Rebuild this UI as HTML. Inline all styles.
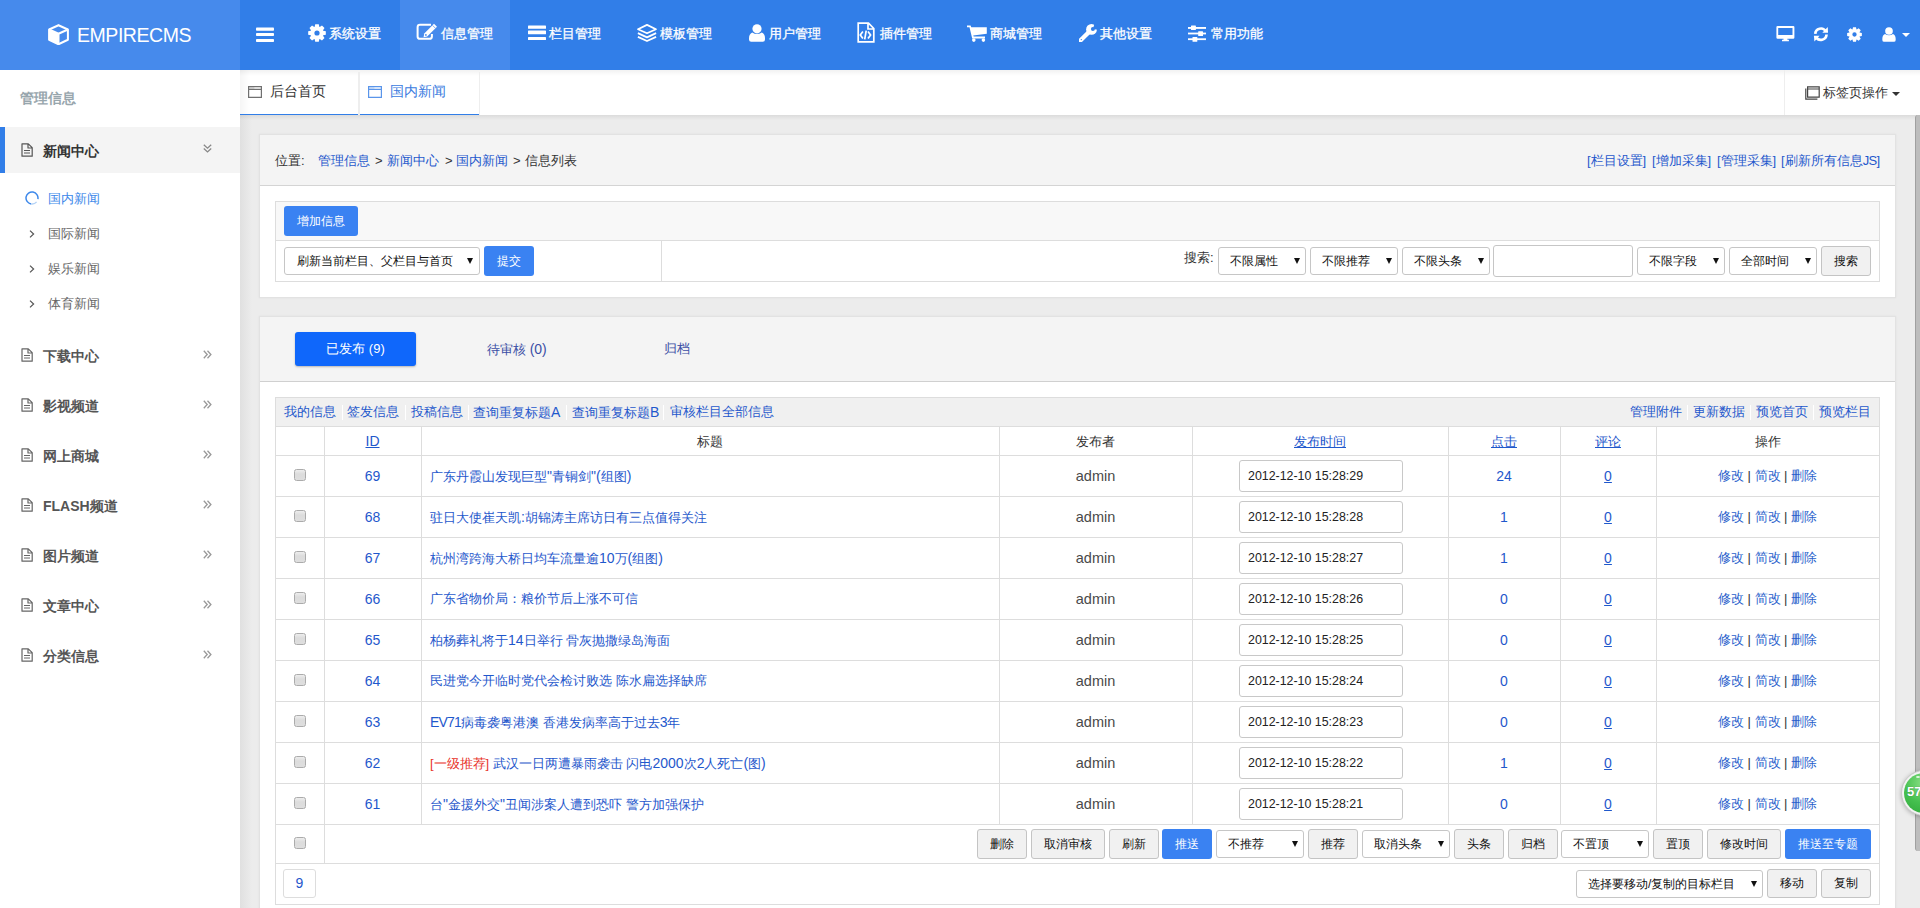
<!DOCTYPE html>
<html><head><meta charset="utf-8"><style>*{box-sizing:border-box;}
html,body{margin:0;padding:0;}
body{width:1920px;height:908px;overflow:hidden;position:relative;background:#ececec;font-family:"Liberation Sans",sans-serif;font-size:13px;color:#333;}
.a{position:absolute;}
.t{position:absolute;white-space:nowrap;line-height:20px;}
.L{font-size:14px;}
u{text-decoration:underline;text-underline-offset:1px;}
</style></head><body>
<div class="a" style="left:0px;top:0px;width:1920px;height:70px;background:#317ee8"></div>
<div class="a" style="left:0px;top:0px;width:240px;height:70px;background:#468aec"></div>
<div class="a" style="left:400px;top:0px;width:110px;height:70px;background:#468aec"></div>
<svg class="a" style="left:48px;top:24px" width="21" height="21.4" viewBox="0 0 23 22" preserveAspectRatio="none"><g fill="none" stroke="#fff" stroke-width="2.2" stroke-linejoin="round"><path d="M11.5 1.2 L21.8 5.6 L21.8 16.2 L11.5 20.8 L1.2 16.2 L1.2 5.6Z"/><path d="M1.2 5.6 L11.5 10 L21.8 5.6 M11.5 10 L11.5 20.8"/></g><path d="M1.2 5.6 L11.5 10 L11.5 20.8 L1.2 16.2Z" fill="#fff"/></svg>
<div class="t" style="left:77px;top:23px;font-size:19.5px;color:#fff;line-height:24px;letter-spacing:-0.45px;">EMPIRECMS</div>
<svg class="a" style="left:256px;top:27px" width="18" height="15" viewBox="0 0 18 15"><g fill="#fff"><rect x="0" y="0.6" width="18" height="3.1" rx="0.8"/><rect x="0" y="6.1" width="18" height="2.9" rx="0.8"/><rect x="0" y="12.1" width="18" height="2.9" rx="0.8"/></g></svg>
<svg class="a" style="left:308px;top:24px" width="18" height="18" viewBox="0 0 18 18"><path fill="#fff" fill-rule="evenodd" d="M6.67 2.82 L7.21 0.18 L10.79 0.18 L11.33 2.82 L11.72 2.99 L13.97 1.50 L16.50 4.03 L15.01 6.28 L15.18 6.67 L17.82 7.21 L17.82 10.79 L15.18 11.33 L15.01 11.72 L16.50 13.97 L13.97 16.50 L11.72 15.01 L11.33 15.18 L10.79 17.82 L7.21 17.82 L6.67 15.18 L6.28 15.01 L4.03 16.50 L1.50 13.97 L2.99 11.72 L2.82 11.33 L0.18 10.79 L0.18 7.21 L2.82 6.67 L2.99 6.28 L1.50 4.03 L4.03 1.50 L6.28 2.99Z M6.40 9.00 a2.60 2.60 0 1 0 5.20 0 a2.60 2.60 0 1 0 -5.20 0Z"/></svg>
<svg class="a" style="left:416px;top:23px" width="22" height="18" viewBox="0 0 22 18"><path fill="none" stroke="#fff" stroke-width="2" d="M15 1.8 H4 Q1.6 1.8 1.6 4.2 V13.4 Q1.6 15.8 4 15.8 H13.5 Q15.9 15.8 15.9 13.4 V11"/><path fill="#fff" d="M7.6 14.2 L8.23 10.6 L18.0 0.81 L20.98 3.78 L11.2 13.57Z"/><path stroke="#468aec" stroke-width="0.7" d="M16.6 2.4 L19.5 5.3"/><circle cx="9.9" cy="11.9" r="0.9" fill="#468aec"/></svg>
<svg class="a" style="left:528px;top:25px" width="18" height="15" viewBox="0 0 18 15"><g fill="#fff"><rect x="0" y="0.6" width="18" height="3.2" rx="0.6"/><rect x="0" y="5.5" width="18" height="3.8" rx="0.6"/><rect x="0" y="12" width="18" height="3" rx="0.6"/></g></svg>
<svg class="a" style="left:636px;top:23px" width="22" height="19" viewBox="0 0 22 19"><g fill="none" stroke="#fff" stroke-width="1.8" stroke-linejoin="round"><path d="M11 1.9 L20 6.2 L11 10.3 L2 6.2Z"/><path d="M1.9 10.1 L11 14.4 L20.1 10.1"/><path d="M1.9 13.9 L11 18 L20.1 13.9"/></g></svg>
<svg class="a" style="left:749px;top:24px" width="16" height="18" viewBox="0 0 16 18"><g fill="#fff"><circle cx="8" cy="4.8" r="4.6"/><path d="M3.2 8.4 Q8 11.4 12.8 8.4 Q16 9.8 16 14.2 V15.5 Q16 17.8 13.8 17.8 H2.2 Q0 17.8 0 15.5 V14.2 Q0 9.8 3.2 8.4Z"/></g></svg>
<svg class="a" style="left:857px;top:22px" width="18" height="21" viewBox="0 0 18 21"><path fill="none" stroke="#fff" stroke-width="1.7" d="M1.2 1.2 H11.5 L16.8 6.5 V19.8 H1.2Z M11 1.2 V7 H16.8"/><path fill="none" stroke="#fff" stroke-width="1.7" d="M5.9 9.4 L3.3 12.9 L5.9 16.4 M11 9.4 L13.6 12.9 L11 16.4 M9.2 8.7 L7.7 17.3"/></svg>
<svg class="a" style="left:967px;top:25px" width="20" height="17" viewBox="0 0 20 17"><g fill="#fff"><path d="M0 0.4 H3.6 L4.3 2.3 H19.8 V8.8 L6.2 10.4 L6.7 11.6 H18 V13.6 H5.2 L2.5 2.2 H0Z"/><circle cx="6.8" cy="15.1" r="1.8"/><circle cx="16.4" cy="15.1" r="1.8"/></g></svg>
<svg class="a" style="left:1077px;top:24px" width="22" height="20" viewBox="0 0 22 20"><defs><mask id="wm"><rect width="22" height="20" fill="#fff"/><circle cx="15.9" cy="4.9" r="2" fill="#000"/><path d="M15.9 4.9 L18.4 -3 L24.5 0.5 L24 6.3Z" fill="#000"/><circle cx="4.3" cy="15.6" r="0.65" fill="#000"/></mask></defs><g mask="url(#wm)" fill="#fff"><circle cx="14.5" cy="5.4" r="5.4"/><path d="M12.5 7.5 L3.4 16.5" stroke="#fff" stroke-width="4.4" stroke-linecap="round"/></g></svg>
<svg class="a" style="left:1188px;top:25px" width="18" height="17" viewBox="0 0 18 17"><g fill="#fff"><rect x="0" y="2" width="18" height="1.9"/><rect x="3" y="0.6" width="4.9" height="4.3" rx="0.5"/><rect x="0" y="7.6" width="18" height="1.8"/><rect x="10.2" y="6.2" width="4.8" height="4.7" rx="0.5"/><rect x="0" y="13.3" width="18" height="1.8"/><rect x="4.5" y="12" width="4.8" height="4.8" rx="0.5"/></g></svg>
<div class="t" style="left:329px;top:24px;font-size:13px;color:#fff;-webkit-text-stroke:0.3px #fff;">系统设置</div>
<div class="t" style="left:441px;top:24px;font-size:13px;color:#fff;-webkit-text-stroke:0.3px #fff;">信息管理</div>
<div class="t" style="left:549px;top:24px;font-size:13px;color:#fff;-webkit-text-stroke:0.3px #fff;">栏目管理</div>
<div class="t" style="left:660px;top:24px;font-size:13px;color:#fff;-webkit-text-stroke:0.3px #fff;">模板管理</div>
<div class="t" style="left:769px;top:24px;font-size:13px;color:#fff;-webkit-text-stroke:0.3px #fff;">用户管理</div>
<div class="t" style="left:880px;top:24px;font-size:13px;color:#fff;-webkit-text-stroke:0.3px #fff;">插件管理</div>
<div class="t" style="left:990px;top:24px;font-size:13px;color:#fff;-webkit-text-stroke:0.3px #fff;">商城管理</div>
<div class="t" style="left:1100px;top:24px;font-size:13px;color:#fff;-webkit-text-stroke:0.3px #fff;">其他设置</div>
<div class="t" style="left:1211px;top:24px;font-size:13px;color:#fff;-webkit-text-stroke:0.3px #fff;">常用功能</div>
<svg class="a" style="left:1776px;top:25px" width="19" height="17" viewBox="0 0 19 17"><path fill="#fff" fill-rule="evenodd" d="M1.6 0.9 H17.2 Q18.4 0.9 18.4 2.1 V12.5 Q18.4 13.7 17.2 13.7 H11.4 V14.8 H12.9 V16.2 H6 V14.8 H7.5 V13.7 H1.6 Q0.4 13.7 0.4 12.5 V2.1 Q0.4 0.9 1.6 0.9Z M2.2 3 V9.9 H16.5 V3Z"/></svg>
<svg class="a" style="left:1813px;top:26px" width="16" height="17" viewBox="0 0 16 17"><g fill="none" stroke="#fff" stroke-width="2.7"><path d="M2.26 7.9 A5.65 5.65 0 0 1 12.79 5.37"/><path d="M13.54 8.5 A5.65 5.65 0 0 1 3.01 11.03"/></g><g fill="#fff"><path d="M9.3 6.7 L15 6.7 L14.8 0.9Z"/><path d="M6.6 9.8 L0.9 9.8 L1.4 15.6Z"/></g></svg>
<svg class="a" style="left:1847px;top:27px" width="15" height="15" viewBox="0 0 18 18"><path fill="#fff" fill-rule="evenodd" d="M6.67 2.82 L7.21 0.18 L10.79 0.18 L11.33 2.82 L11.72 2.99 L13.97 1.50 L16.50 4.03 L15.01 6.28 L15.18 6.67 L17.82 7.21 L17.82 10.79 L15.18 11.33 L15.01 11.72 L16.50 13.97 L13.97 16.50 L11.72 15.01 L11.33 15.18 L10.79 17.82 L7.21 17.82 L6.67 15.18 L6.28 15.01 L4.03 16.50 L1.50 13.97 L2.99 11.72 L2.82 11.33 L0.18 10.79 L0.18 7.21 L2.82 6.67 L2.99 6.28 L1.50 4.03 L4.03 1.50 L6.28 2.99Z M6.40 9.00 a2.60 2.60 0 1 0 5.20 0 a2.60 2.60 0 1 0 -5.20 0Z"/></svg>
<svg class="a" style="left:1882px;top:27px" width="14" height="15" viewBox="0 0 16 18"><g fill="#fff"><circle cx="8" cy="4.8" r="4.6"/><path d="M3.2 8.4 Q8 11.4 12.8 8.4 Q16 9.8 16 14.2 V15.5 Q16 17.8 13.8 17.8 H2.2 Q0 17.8 0 15.5 V14.2 Q0 9.8 3.2 8.4Z"/></g></svg>
<div class="a" style="left:1902px;top:33px;width:0;height:0;border-left:4px solid transparent;border-right:4px solid transparent;border-top:4.5px solid #fff"></div>
<div class="a" style="left:0px;top:70px;width:240px;height:838px;background:#fff"></div>
<div class="t" style="left:20px;top:88px;font-size:14px;color:#98a6ad;font-weight:bold;">管理信息</div>
<div class="a" style="left:0px;top:127px;width:240px;height:46px;background:#f4f4f4"></div>
<div class="a" style="left:0px;top:127px;width:5px;height:46px;background:#317ee8"></div>
<svg class="a" style="left:21px;top:143px" width="12" height="14" viewBox="0 0 12 14"><path fill="none" stroke="#555" stroke-width="1.2" stroke-linejoin="round" d="M1 0.8 H7.3 L11.2 4.7 V13.2 H1Z M7 0.8 V5 H11.2"/><path stroke="#555" stroke-width="1" d="M3 7.5 H9 M3 10 H9"/></svg>
<div class="t" style="left:43px;top:141px;font-size:14px;color:#333;font-weight:bold;">新闻中心</div>
<svg class="a" style="left:203px;top:144px" width="9" height="9" viewBox="0 0 9 9"><path fill="none" stroke="#888" stroke-width="1.3" d="M0.8 0.8 L4.5 4.2 L8.2 0.8 M0.8 4.5 L4.5 7.9 L8.2 4.5"/></svg>
<svg class="a" style="left:25px;top:191px" width="14" height="14" viewBox="0 0 14 14"><path fill="none" stroke="#3d88ea" stroke-width="1.5" d="M12.91 8.04 A6 6 0 1 0 5.96 12.91"/><path fill="none" stroke="#b5d3f6" stroke-width="1.5" d="M5.96 12.91 A6 6 0 0 0 11.6 10.86"/></svg>
<div class="t" style="left:48px;top:189px;font-size:13px;color:#3d88ea;">国内新闻</div>
<svg class="a" style="left:29px;top:230px" width="6" height="8" viewBox="0 0 6 8"><path fill="none" stroke="#555" stroke-width="1.2" d="M1 0.6 L4.6 4 L1 7.4"/></svg>
<div class="t" style="left:48px;top:224px;font-size:13px;color:#666;">国际新闻</div>
<svg class="a" style="left:29px;top:265px" width="6" height="8" viewBox="0 0 6 8"><path fill="none" stroke="#555" stroke-width="1.2" d="M1 0.6 L4.6 4 L1 7.4"/></svg>
<div class="t" style="left:48px;top:259px;font-size:13px;color:#666;">娱乐新闻</div>
<svg class="a" style="left:29px;top:300px" width="6" height="8" viewBox="0 0 6 8"><path fill="none" stroke="#555" stroke-width="1.2" d="M1 0.6 L4.6 4 L1 7.4"/></svg>
<div class="t" style="left:48px;top:294px;font-size:13px;color:#666;">体育新闻</div>
<svg class="a" style="left:21px;top:348px" width="12" height="14" viewBox="0 0 12 14"><path fill="none" stroke="#666" stroke-width="1.2" stroke-linejoin="round" d="M1 0.8 H7.3 L11.2 4.7 V13.2 H1Z M7 0.8 V5 H11.2"/><path stroke="#666" stroke-width="1" d="M3 7.5 H9 M3 10 H9"/></svg>
<div class="t" style="left:43px;top:346px;font-size:14px;color:#555;font-weight:bold;">下载中心</div>
<svg class="a" style="left:203px;top:350px" width="9" height="9" viewBox="0 0 9 9"><path fill="none" stroke="#999" stroke-width="1.3" d="M0.8 0.8 L4.2 4.5 L0.8 8.2 M4.5 0.8 L7.9 4.5 L4.5 8.2"/></svg>
<svg class="a" style="left:21px;top:398px" width="12" height="14" viewBox="0 0 12 14"><path fill="none" stroke="#666" stroke-width="1.2" stroke-linejoin="round" d="M1 0.8 H7.3 L11.2 4.7 V13.2 H1Z M7 0.8 V5 H11.2"/><path stroke="#666" stroke-width="1" d="M3 7.5 H9 M3 10 H9"/></svg>
<div class="t" style="left:43px;top:396px;font-size:14px;color:#555;font-weight:bold;">影视频道</div>
<svg class="a" style="left:203px;top:400px" width="9" height="9" viewBox="0 0 9 9"><path fill="none" stroke="#999" stroke-width="1.3" d="M0.8 0.8 L4.2 4.5 L0.8 8.2 M4.5 0.8 L7.9 4.5 L4.5 8.2"/></svg>
<svg class="a" style="left:21px;top:448px" width="12" height="14" viewBox="0 0 12 14"><path fill="none" stroke="#666" stroke-width="1.2" stroke-linejoin="round" d="M1 0.8 H7.3 L11.2 4.7 V13.2 H1Z M7 0.8 V5 H11.2"/><path stroke="#666" stroke-width="1" d="M3 7.5 H9 M3 10 H9"/></svg>
<div class="t" style="left:43px;top:446px;font-size:14px;color:#555;font-weight:bold;">网上商城</div>
<svg class="a" style="left:203px;top:450px" width="9" height="9" viewBox="0 0 9 9"><path fill="none" stroke="#999" stroke-width="1.3" d="M0.8 0.8 L4.2 4.5 L0.8 8.2 M4.5 0.8 L7.9 4.5 L4.5 8.2"/></svg>
<svg class="a" style="left:21px;top:498px" width="12" height="14" viewBox="0 0 12 14"><path fill="none" stroke="#666" stroke-width="1.2" stroke-linejoin="round" d="M1 0.8 H7.3 L11.2 4.7 V13.2 H1Z M7 0.8 V5 H11.2"/><path stroke="#666" stroke-width="1" d="M3 7.5 H9 M3 10 H9"/></svg>
<div class="t" style="left:43px;top:496px;font-size:14px;color:#555;font-weight:bold;"><span style="font-size:14px">FLASH</span>频道</div>
<svg class="a" style="left:203px;top:500px" width="9" height="9" viewBox="0 0 9 9"><path fill="none" stroke="#999" stroke-width="1.3" d="M0.8 0.8 L4.2 4.5 L0.8 8.2 M4.5 0.8 L7.9 4.5 L4.5 8.2"/></svg>
<svg class="a" style="left:21px;top:548px" width="12" height="14" viewBox="0 0 12 14"><path fill="none" stroke="#666" stroke-width="1.2" stroke-linejoin="round" d="M1 0.8 H7.3 L11.2 4.7 V13.2 H1Z M7 0.8 V5 H11.2"/><path stroke="#666" stroke-width="1" d="M3 7.5 H9 M3 10 H9"/></svg>
<div class="t" style="left:43px;top:546px;font-size:14px;color:#555;font-weight:bold;">图片频道</div>
<svg class="a" style="left:203px;top:550px" width="9" height="9" viewBox="0 0 9 9"><path fill="none" stroke="#999" stroke-width="1.3" d="M0.8 0.8 L4.2 4.5 L0.8 8.2 M4.5 0.8 L7.9 4.5 L4.5 8.2"/></svg>
<svg class="a" style="left:21px;top:598px" width="12" height="14" viewBox="0 0 12 14"><path fill="none" stroke="#666" stroke-width="1.2" stroke-linejoin="round" d="M1 0.8 H7.3 L11.2 4.7 V13.2 H1Z M7 0.8 V5 H11.2"/><path stroke="#666" stroke-width="1" d="M3 7.5 H9 M3 10 H9"/></svg>
<div class="t" style="left:43px;top:596px;font-size:14px;color:#555;font-weight:bold;">文章中心</div>
<svg class="a" style="left:203px;top:600px" width="9" height="9" viewBox="0 0 9 9"><path fill="none" stroke="#999" stroke-width="1.3" d="M0.8 0.8 L4.2 4.5 L0.8 8.2 M4.5 0.8 L7.9 4.5 L4.5 8.2"/></svg>
<svg class="a" style="left:21px;top:648px" width="12" height="14" viewBox="0 0 12 14"><path fill="none" stroke="#666" stroke-width="1.2" stroke-linejoin="round" d="M1 0.8 H7.3 L11.2 4.7 V13.2 H1Z M7 0.8 V5 H11.2"/><path stroke="#666" stroke-width="1" d="M3 7.5 H9 M3 10 H9"/></svg>
<div class="t" style="left:43px;top:646px;font-size:14px;color:#555;font-weight:bold;">分类信息</div>
<svg class="a" style="left:203px;top:650px" width="9" height="9" viewBox="0 0 9 9"><path fill="none" stroke="#999" stroke-width="1.3" d="M0.8 0.8 L4.2 4.5 L0.8 8.2 M4.5 0.8 L7.9 4.5 L4.5 8.2"/></svg>
<div class="a" style="left:240px;top:70px;width:1680px;height:838px;background:#ececec"></div>
<div class="a" style="left:240px;top:115px;width:12px;height:793px;background:linear-gradient(to right,rgba(0,0,0,.05),rgba(0,0,0,0))"></div>
<div class="a" style="left:240px;top:70px;width:1680px;height:45px;background:#fff"></div>
<div class="a" style="left:240px;top:115px;width:1680px;height:5px;background:linear-gradient(to bottom,rgba(0,0,0,.07),rgba(0,0,0,0))"></div>
<div class="a" style="left:240px;top:70px;width:1680px;height:6px;background:linear-gradient(to bottom,rgba(0,0,0,.05),rgba(0,0,0,0))"></div>
<div class="a" style="left:240px;top:70px;width:10px;height:45px;background:linear-gradient(to right,rgba(0,0,0,.04),rgba(0,0,0,0))"></div>
<div class="a" style="left:240px;top:114px;width:118px;height:1px;background:#317ee8"></div>
<div class="a" style="left:360px;top:114px;width:119px;height:1px;background:#317ee8"></div>
<div class="a" style="left:358px;top:72px;width:2px;height:43px;background:#eee"></div>
<div class="a" style="left:479px;top:72px;width:1px;height:43px;background:#eee"></div>
<div class="a" style="left:1784px;top:70px;width:1px;height:45px;background:#eee"></div>
<svg class="a" style="left:248px;top:86px" width="14" height="12" viewBox="0 0 14 12"><path fill="none" stroke="#707070" stroke-width="1.2" d="M0.6 0.6 H13.4 V11.4 H0.6Z M0.6 3.4 H13.4"/><rect x="1.4" y="1.4" width="5" height="1.2" fill="#707070" opacity="0.35"/></svg>
<div class="t" style="left:270px;top:81px;font-size:14px;color:#333;">后台首页</div>
<svg class="a" style="left:368px;top:86px" width="14" height="12" viewBox="0 0 14 12"><path fill="none" stroke="#5a95ea" stroke-width="1.2" d="M0.6 0.6 H13.4 V11.4 H0.6Z M0.6 3.4 H13.4"/><rect x="1.4" y="1.4" width="5" height="1.2" fill="#5a95ea" opacity="0.35"/></svg>
<div class="t" style="left:390px;top:81px;font-size:14px;color:#3a7be0;">国内新闻</div>
<svg class="a" style="left:1805px;top:86px" width="15" height="14" viewBox="0 0 15 14"><path fill="none" stroke="#444" stroke-width="1.2" d="M2.6 0.8 H14.2 V11.2 H2.6Z M2.6 3 H14.2 M0.8 2.6 V13.2 H12.4"/></svg>
<div class="t" style="left:1823px;top:83px;font-size:13px;color:#333;">标签页操作</div>
<div class="a" style="left:1892px;top:92px;width:0;height:0;border-left:4px solid transparent;border-right:4px solid transparent;border-top:4px solid #333"></div>
<div class="a" style="left:259px;top:134px;width:1637px;height:164px;background:#fff;border:1px solid #e2e2e2;box-shadow:0 0 2px rgba(0,0,0,.06)"></div>
<div class="a" style="left:260px;top:135px;width:1635px;height:51px;background:#f4f4f4;border-bottom:1px solid #d4d4d4"></div>
<div class="t" style="left:275px;top:151px;font-size:13px;color:#333;">位置:</div>
<div class="t" style="left:318px;top:151px;font-size:13px;color:#1f58cc;">管理信息</div>
<div class="t" style="left:375px;top:151px;font-size:13px;color:#333;">&gt;</div>
<div class="t" style="left:387px;top:151px;font-size:13px;color:#1f58cc;">新闻中心</div>
<div class="t" style="left:445px;top:151px;font-size:13px;color:#333;">&gt;</div>
<div class="t" style="left:456px;top:151px;font-size:13px;color:#1f58cc;">国内新闻</div>
<div class="t" style="left:513px;top:151px;font-size:13px;color:#333;">&gt;</div>
<div class="t" style="left:525px;top:151px;font-size:13px;color:#333;">信息列表</div>
<div class="t" style="left:1587px;top:151px;font-size:13px;color:#1f58cc;">[栏目设置]</div>
<div class="t" style="left:1652px;top:151px;font-size:13px;color:#1f58cc;">[增加采集]</div>
<div class="t" style="left:1717px;top:151px;font-size:13px;color:#1f58cc;">[管理采集]</div>
<div class="t" style="left:1781px;top:151px;font-size:13px;color:#1f58cc;">[刷新所有信息<span style="letter-spacing:-0.6px">JS</span>]</div>
<div class="a" style="left:275px;top:201px;width:1605px;height:81px;background:#fff;border:1px solid #dddddd"></div>
<div class="a" style="left:276px;top:202px;width:1603px;height:39px;background:#f8f8f8;border-bottom:1px solid #dddddd"></div>
<div class="a" style="left:661px;top:241px;width:1px;height:40px;background:#dddddd"></div>
<div class="a" style="left:284px;top:206px;width:74px;height:30px;background:#3a82f2;border-radius:3px"></div>
<div class="t" style="left:284px;top:211px;width:74px;text-align:center;font-size:12px;color:#fff">增加信息</div>
<div class="a" style="left:284px;top:247px;width:196px;height:28px;background:#fff;border:1px solid #c6c6c6;border-radius:3px"></div>
<div class="t" style="left:297px;top:251px;font-size:12px;color:#111;">刷新当前栏目、父栏目与首页</div>
<div class="a" style="left:467px;top:258px;width:0;height:0;border-left:3.5px solid transparent;border-right:3.5px solid transparent;border-top:6px solid #111"></div>
<div class="a" style="left:484px;top:246px;width:50px;height:30px;background:#3a82f2;border-radius:3px"></div>
<div class="t" style="left:484px;top:251px;width:50px;text-align:center;font-size:12px;color:#fff">提交</div>
<div class="t" style="left:1184px;top:248px;font-size:13px;color:#333;">搜索:</div>
<div class="a" style="left:1218px;top:247px;width:88px;height:28px;background:#fff;border:1px solid #c6c6c6;border-radius:3px"></div>
<div class="t" style="left:1230px;top:251px;font-size:12px;color:#111;">不限属性</div>
<div class="a" style="left:1294px;top:258px;width:0;height:0;border-left:3.5px solid transparent;border-right:3.5px solid transparent;border-top:6px solid #111"></div>
<div class="a" style="left:1310px;top:247px;width:88px;height:28px;background:#fff;border:1px solid #c6c6c6;border-radius:3px"></div>
<div class="t" style="left:1322px;top:251px;font-size:12px;color:#111;">不限推荐</div>
<div class="a" style="left:1386px;top:258px;width:0;height:0;border-left:3.5px solid transparent;border-right:3.5px solid transparent;border-top:6px solid #111"></div>
<div class="a" style="left:1402px;top:247px;width:88px;height:28px;background:#fff;border:1px solid #c6c6c6;border-radius:3px"></div>
<div class="t" style="left:1414px;top:251px;font-size:12px;color:#111;">不限头条</div>
<div class="a" style="left:1478px;top:258px;width:0;height:0;border-left:3.5px solid transparent;border-right:3.5px solid transparent;border-top:6px solid #111"></div>
<div class="a" style="left:1493px;top:245px;width:140px;height:32px;background:#fff;border:1px solid #c6c6c6;border-radius:3px"></div>
<div class="a" style="left:1637px;top:247px;width:88px;height:28px;background:#fff;border:1px solid #c6c6c6;border-radius:3px"></div>
<div class="t" style="left:1649px;top:251px;font-size:12px;color:#111;">不限字段</div>
<div class="a" style="left:1713px;top:258px;width:0;height:0;border-left:3.5px solid transparent;border-right:3.5px solid transparent;border-top:6px solid #111"></div>
<div class="a" style="left:1729px;top:247px;width:88px;height:28px;background:#fff;border:1px solid #c6c6c6;border-radius:3px"></div>
<div class="t" style="left:1741px;top:251px;font-size:12px;color:#111;">全部时间</div>
<div class="a" style="left:1805px;top:258px;width:0;height:0;border-left:3.5px solid transparent;border-right:3.5px solid transparent;border-top:6px solid #111"></div>
<div class="a" style="left:1821px;top:246px;width:50px;height:30px;background:#f1f1f1;border:1px solid #c4c4c4;border-radius:3px"></div>
<div class="t" style="left:1821px;top:251px;width:50px;text-align:center;font-size:12px;color:#111">搜索</div>
<div class="a" style="left:259px;top:316px;width:1637px;height:604px;background:#fff;border:1px solid #e2e2e2;box-shadow:0 0 2px rgba(0,0,0,.06)"></div>
<div class="a" style="left:260px;top:317px;width:1635px;height:65px;background:#f4f4f4;border-bottom:1px solid #d0d0d0"></div>
<div class="a" style="left:295px;top:332px;width:121px;height:34px;background:#0f67fb;border-radius:3px;box-shadow:0 1px 2px rgba(0,0,0,.25)"></div>
<div class="t" style="left:295px;top:339px;font-size:13px;color:#fff;"><div style="width:121px;text-align:center">已发布 (9)</div></div>
<div class="t" style="left:487px;top:339px;font-size:13px;color:#3b4fa5;">待审核 <span class="L">(0)</span></div>
<div class="t" style="left:664px;top:339px;font-size:13px;color:#3b4fa5;">归档</div>
<div class="a" style="left:275px;top:397px;width:1605px;height:508px;background:#fff;border:1px solid #dddddd"></div>
<div class="a" style="left:276px;top:398px;width:1603px;height:29px;background:#f0f0f0;border-bottom:1px solid #dddddd"></div>
<div class="t" style="left:284px;top:402px;font-size:13px;color:#1f58cc;">我的信息</div>
<div class="t" style="left:347px;top:402px;font-size:13px;color:#1f58cc;">签发信息</div>
<div class="t" style="left:411px;top:402px;font-size:13px;color:#1f58cc;">投稿信息</div>
<div class="t" style="left:473px;top:402px;font-size:13px;color:#1f58cc;">查询重复标题<span class="L">A</span></div>
<div class="t" style="left:572px;top:402px;font-size:13px;color:#1f58cc;">查询重复标题<span class="L">B</span></div>
<div class="t" style="left:670px;top:402px;font-size:13px;color:#1f58cc;">审核栏目全部信息</div>
<div class="a" style="left:342px;top:405px;width:1px;height:15px;background:#fff"></div>
<div class="a" style="left:405px;top:405px;width:1px;height:15px;background:#fff"></div>
<div class="a" style="left:468px;top:405px;width:1px;height:15px;background:#fff"></div>
<div class="a" style="left:566px;top:405px;width:1px;height:15px;background:#fff"></div>
<div class="a" style="left:663px;top:405px;width:1px;height:15px;background:#fff"></div>
<div class="t" style="left:1630px;top:402px;font-size:13px;color:#1f58cc;">管理附件</div>
<div class="t" style="left:1693px;top:402px;font-size:13px;color:#1f58cc;">更新数据</div>
<div class="t" style="left:1756px;top:402px;font-size:13px;color:#1f58cc;">预览首页</div>
<div class="t" style="left:1819px;top:402px;font-size:13px;color:#1f58cc;">预览栏目</div>
<div class="a" style="left:1687px;top:405px;width:1px;height:15px;background:#fff"></div>
<div class="a" style="left:1750px;top:405px;width:1px;height:15px;background:#fff"></div>
<div class="a" style="left:1813px;top:405px;width:1px;height:15px;background:#fff"></div>
<div class="a" style="left:276px;top:455px;width:1603px;height:1px;background:#dddddd"></div>
<div class="a" style="left:276px;top:496px;width:1603px;height:1px;background:#dddddd"></div>
<div class="a" style="left:276px;top:537px;width:1603px;height:1px;background:#dddddd"></div>
<div class="a" style="left:276px;top:578px;width:1603px;height:1px;background:#dddddd"></div>
<div class="a" style="left:276px;top:619px;width:1603px;height:1px;background:#dddddd"></div>
<div class="a" style="left:276px;top:660px;width:1603px;height:1px;background:#dddddd"></div>
<div class="a" style="left:276px;top:701px;width:1603px;height:1px;background:#dddddd"></div>
<div class="a" style="left:276px;top:742px;width:1603px;height:1px;background:#dddddd"></div>
<div class="a" style="left:276px;top:783px;width:1603px;height:1px;background:#dddddd"></div>
<div class="a" style="left:276px;top:824px;width:1603px;height:1px;background:#dddddd"></div>
<div class="a" style="left:276px;top:863px;width:1603px;height:1px;background:#dddddd"></div>
<div class="a" style="left:324px;top:426px;width:1px;height:398px;background:#dddddd"></div>
<div class="a" style="left:421px;top:426px;width:1px;height:398px;background:#dddddd"></div>
<div class="a" style="left:999px;top:426px;width:1px;height:398px;background:#dddddd"></div>
<div class="a" style="left:1192px;top:426px;width:1px;height:398px;background:#dddddd"></div>
<div class="a" style="left:1448px;top:426px;width:1px;height:398px;background:#dddddd"></div>
<div class="a" style="left:1560px;top:426px;width:1px;height:398px;background:#dddddd"></div>
<div class="a" style="left:1656px;top:426px;width:1px;height:398px;background:#dddddd"></div>
<div class="a" style="left:324px;top:824px;width:1px;height:39px;background:#dddddd"></div>
<div class="t" style="left:324px;top:431px;width:97px;text-align:center;font-size:14px;color:#1f58cc;"><u>ID</u></div>
<div class="t" style="left:421px;top:432px;width:578px;text-align:center;font-size:13px;color:#333;">标题</div>
<div class="t" style="left:999px;top:432px;width:193px;text-align:center;font-size:13px;color:#333;">发布者</div>
<div class="t" style="left:1192px;top:432px;width:256px;text-align:center;font-size:13px;color:#1f58cc;"><u>发布时间</u></div>
<div class="t" style="left:1448px;top:432px;width:112px;text-align:center;font-size:13px;color:#1f58cc;"><u>点击</u></div>
<div class="t" style="left:1560px;top:432px;width:96px;text-align:center;font-size:13px;color:#1f58cc;"><u>评论</u></div>
<div class="t" style="left:1656px;top:432px;width:223px;text-align:center;font-size:13px;color:#333;">操作</div>
<div class="a" style="left:294px;top:469px;width:12px;height:12px;border:1px solid #ababab;border-radius:2.5px;background:linear-gradient(#ededed,#dcdcdc 40%,#dedede)"></div>
<div class="t" style="left:324px;top:466px;width:97px;text-align:center;font-size:14px;color:#1f58cc;">69</div>
<div class="t" style="left:430px;top:466px;font-size:13px;color:#1f58cc;">广东丹霞山发现巨型<span class="L">"</span>青铜剑<span class="L">"(</span>组图<span class="L">)</span></div>
<div class="t" style="left:999px;top:466px;width:193px;text-align:center;font-size:14.5px;color:#4a4a4a;">admin</div>
<div class="a" style="left:1239px;top:460px;width:164px;height:32px;background:#fff;border:1px solid #c8c8c8;border-radius:3px"></div>
<div class="t" style="left:1248px;top:466px;font-size:12.4px;color:#222;">2012-12-10 15:28:29</div>
<div class="t" style="left:1448px;top:466px;width:112px;text-align:center;font-size:14px;color:#1f58cc;">24</div>
<div class="t" style="left:1560px;top:466px;width:96px;text-align:center;font-size:14px;color:#1f58cc;"><u>0</u></div>
<div class="t" style="left:1656px;top:466px;width:223px;text-align:center;font-size:13px;color:#333;"><span style="color:#2a5fcc">修改</span> | <span style="color:#2a5fcc">简改</span> | <span style="color:#2a5fcc">删除</span></div>
<div class="a" style="left:294px;top:510px;width:12px;height:12px;border:1px solid #ababab;border-radius:2.5px;background:linear-gradient(#ededed,#dcdcdc 40%,#dedede)"></div>
<div class="t" style="left:324px;top:507px;width:97px;text-align:center;font-size:14px;color:#1f58cc;">68</div>
<div class="t" style="left:430px;top:507px;font-size:13px;color:#1f58cc;">驻日大使崔天凯<span class="L">:</span>胡锦涛主席访日有三点值得关注</div>
<div class="t" style="left:999px;top:507px;width:193px;text-align:center;font-size:14.5px;color:#4a4a4a;">admin</div>
<div class="a" style="left:1239px;top:501px;width:164px;height:32px;background:#fff;border:1px solid #c8c8c8;border-radius:3px"></div>
<div class="t" style="left:1248px;top:507px;font-size:12.4px;color:#222;">2012-12-10 15:28:28</div>
<div class="t" style="left:1448px;top:507px;width:112px;text-align:center;font-size:14px;color:#1f58cc;">1</div>
<div class="t" style="left:1560px;top:507px;width:96px;text-align:center;font-size:14px;color:#1f58cc;"><u>0</u></div>
<div class="t" style="left:1656px;top:507px;width:223px;text-align:center;font-size:13px;color:#333;"><span style="color:#2a5fcc">修改</span> | <span style="color:#2a5fcc">简改</span> | <span style="color:#2a5fcc">删除</span></div>
<div class="a" style="left:294px;top:551px;width:12px;height:12px;border:1px solid #ababab;border-radius:2.5px;background:linear-gradient(#ededed,#dcdcdc 40%,#dedede)"></div>
<div class="t" style="left:324px;top:548px;width:97px;text-align:center;font-size:14px;color:#1f58cc;">67</div>
<div class="t" style="left:430px;top:548px;font-size:13px;color:#1f58cc;">杭州湾跨海大桥日均车流量逾<span class="L">10</span>万<span class="L">(</span>组图<span class="L">)</span></div>
<div class="t" style="left:999px;top:548px;width:193px;text-align:center;font-size:14.5px;color:#4a4a4a;">admin</div>
<div class="a" style="left:1239px;top:542px;width:164px;height:32px;background:#fff;border:1px solid #c8c8c8;border-radius:3px"></div>
<div class="t" style="left:1248px;top:548px;font-size:12.4px;color:#222;">2012-12-10 15:28:27</div>
<div class="t" style="left:1448px;top:548px;width:112px;text-align:center;font-size:14px;color:#1f58cc;">1</div>
<div class="t" style="left:1560px;top:548px;width:96px;text-align:center;font-size:14px;color:#1f58cc;"><u>0</u></div>
<div class="t" style="left:1656px;top:548px;width:223px;text-align:center;font-size:13px;color:#333;"><span style="color:#2a5fcc">修改</span> | <span style="color:#2a5fcc">简改</span> | <span style="color:#2a5fcc">删除</span></div>
<div class="a" style="left:294px;top:592px;width:12px;height:12px;border:1px solid #ababab;border-radius:2.5px;background:linear-gradient(#ededed,#dcdcdc 40%,#dedede)"></div>
<div class="t" style="left:324px;top:589px;width:97px;text-align:center;font-size:14px;color:#1f58cc;">66</div>
<div class="t" style="left:430px;top:589px;font-size:13px;color:#1f58cc;">广东省物价局：粮价节后上涨不可信</div>
<div class="t" style="left:999px;top:589px;width:193px;text-align:center;font-size:14.5px;color:#4a4a4a;">admin</div>
<div class="a" style="left:1239px;top:583px;width:164px;height:32px;background:#fff;border:1px solid #c8c8c8;border-radius:3px"></div>
<div class="t" style="left:1248px;top:589px;font-size:12.4px;color:#222;">2012-12-10 15:28:26</div>
<div class="t" style="left:1448px;top:589px;width:112px;text-align:center;font-size:14px;color:#1f58cc;">0</div>
<div class="t" style="left:1560px;top:589px;width:96px;text-align:center;font-size:14px;color:#1f58cc;"><u>0</u></div>
<div class="t" style="left:1656px;top:589px;width:223px;text-align:center;font-size:13px;color:#333;"><span style="color:#2a5fcc">修改</span> | <span style="color:#2a5fcc">简改</span> | <span style="color:#2a5fcc">删除</span></div>
<div class="a" style="left:294px;top:633px;width:12px;height:12px;border:1px solid #ababab;border-radius:2.5px;background:linear-gradient(#ededed,#dcdcdc 40%,#dedede)"></div>
<div class="t" style="left:324px;top:630px;width:97px;text-align:center;font-size:14px;color:#1f58cc;">65</div>
<div class="t" style="left:430px;top:630px;font-size:13px;color:#1f58cc;">柏杨葬礼将于<span class="L">14</span>日举行 骨灰抛撒绿岛海面</div>
<div class="t" style="left:999px;top:630px;width:193px;text-align:center;font-size:14.5px;color:#4a4a4a;">admin</div>
<div class="a" style="left:1239px;top:624px;width:164px;height:32px;background:#fff;border:1px solid #c8c8c8;border-radius:3px"></div>
<div class="t" style="left:1248px;top:630px;font-size:12.4px;color:#222;">2012-12-10 15:28:25</div>
<div class="t" style="left:1448px;top:630px;width:112px;text-align:center;font-size:14px;color:#1f58cc;">0</div>
<div class="t" style="left:1560px;top:630px;width:96px;text-align:center;font-size:14px;color:#1f58cc;"><u>0</u></div>
<div class="t" style="left:1656px;top:630px;width:223px;text-align:center;font-size:13px;color:#333;"><span style="color:#2a5fcc">修改</span> | <span style="color:#2a5fcc">简改</span> | <span style="color:#2a5fcc">删除</span></div>
<div class="a" style="left:294px;top:674px;width:12px;height:12px;border:1px solid #ababab;border-radius:2.5px;background:linear-gradient(#ededed,#dcdcdc 40%,#dedede)"></div>
<div class="t" style="left:324px;top:671px;width:97px;text-align:center;font-size:14px;color:#1f58cc;">64</div>
<div class="t" style="left:430px;top:671px;font-size:13px;color:#1f58cc;">民进党今开临时党代会检讨败选 陈水扁选择缺席</div>
<div class="t" style="left:999px;top:671px;width:193px;text-align:center;font-size:14.5px;color:#4a4a4a;">admin</div>
<div class="a" style="left:1239px;top:665px;width:164px;height:32px;background:#fff;border:1px solid #c8c8c8;border-radius:3px"></div>
<div class="t" style="left:1248px;top:671px;font-size:12.4px;color:#222;">2012-12-10 15:28:24</div>
<div class="t" style="left:1448px;top:671px;width:112px;text-align:center;font-size:14px;color:#1f58cc;">0</div>
<div class="t" style="left:1560px;top:671px;width:96px;text-align:center;font-size:14px;color:#1f58cc;"><u>0</u></div>
<div class="t" style="left:1656px;top:671px;width:223px;text-align:center;font-size:13px;color:#333;"><span style="color:#2a5fcc">修改</span> | <span style="color:#2a5fcc">简改</span> | <span style="color:#2a5fcc">删除</span></div>
<div class="a" style="left:294px;top:715px;width:12px;height:12px;border:1px solid #ababab;border-radius:2.5px;background:linear-gradient(#ededed,#dcdcdc 40%,#dedede)"></div>
<div class="t" style="left:324px;top:712px;width:97px;text-align:center;font-size:14px;color:#1f58cc;">63</div>
<div class="t" style="left:430px;top:712px;font-size:13px;color:#1f58cc;"><span class="L" style="letter-spacing:-0.8px">EV71</span>病毒袭粤港澳 香港发病率高于过去<span class="L">3</span>年</div>
<div class="t" style="left:999px;top:712px;width:193px;text-align:center;font-size:14.5px;color:#4a4a4a;">admin</div>
<div class="a" style="left:1239px;top:706px;width:164px;height:32px;background:#fff;border:1px solid #c8c8c8;border-radius:3px"></div>
<div class="t" style="left:1248px;top:712px;font-size:12.4px;color:#222;">2012-12-10 15:28:23</div>
<div class="t" style="left:1448px;top:712px;width:112px;text-align:center;font-size:14px;color:#1f58cc;">0</div>
<div class="t" style="left:1560px;top:712px;width:96px;text-align:center;font-size:14px;color:#1f58cc;"><u>0</u></div>
<div class="t" style="left:1656px;top:712px;width:223px;text-align:center;font-size:13px;color:#333;"><span style="color:#2a5fcc">修改</span> | <span style="color:#2a5fcc">简改</span> | <span style="color:#2a5fcc">删除</span></div>
<div class="a" style="left:294px;top:756px;width:12px;height:12px;border:1px solid #ababab;border-radius:2.5px;background:linear-gradient(#ededed,#dcdcdc 40%,#dedede)"></div>
<div class="t" style="left:324px;top:753px;width:97px;text-align:center;font-size:14px;color:#1f58cc;">62</div>
<div class="t" style="left:430px;top:753px;font-size:13px;color:#1f58cc;"><span style="color:#e8342a">[一级推荐]</span> 武汉一日两遭暴雨袭击 闪电<span class="L">2000</span>次<span class="L">2</span>人死亡<span class="L">(</span>图<span class="L">)</span></div>
<div class="t" style="left:999px;top:753px;width:193px;text-align:center;font-size:14.5px;color:#4a4a4a;">admin</div>
<div class="a" style="left:1239px;top:747px;width:164px;height:32px;background:#fff;border:1px solid #c8c8c8;border-radius:3px"></div>
<div class="t" style="left:1248px;top:753px;font-size:12.4px;color:#222;">2012-12-10 15:28:22</div>
<div class="t" style="left:1448px;top:753px;width:112px;text-align:center;font-size:14px;color:#1f58cc;">1</div>
<div class="t" style="left:1560px;top:753px;width:96px;text-align:center;font-size:14px;color:#1f58cc;"><u>0</u></div>
<div class="t" style="left:1656px;top:753px;width:223px;text-align:center;font-size:13px;color:#333;"><span style="color:#2a5fcc">修改</span> | <span style="color:#2a5fcc">简改</span> | <span style="color:#2a5fcc">删除</span></div>
<div class="a" style="left:294px;top:797px;width:12px;height:12px;border:1px solid #ababab;border-radius:2.5px;background:linear-gradient(#ededed,#dcdcdc 40%,#dedede)"></div>
<div class="t" style="left:324px;top:794px;width:97px;text-align:center;font-size:14px;color:#1f58cc;">61</div>
<div class="t" style="left:430px;top:794px;font-size:13px;color:#1f58cc;">台<span class="L">"</span>金援外交<span class="L">"</span>丑闻涉案人遭到恐吓 警方加强保护</div>
<div class="t" style="left:999px;top:794px;width:193px;text-align:center;font-size:14.5px;color:#4a4a4a;">admin</div>
<div class="a" style="left:1239px;top:788px;width:164px;height:32px;background:#fff;border:1px solid #c8c8c8;border-radius:3px"></div>
<div class="t" style="left:1248px;top:794px;font-size:12.4px;color:#222;">2012-12-10 15:28:21</div>
<div class="t" style="left:1448px;top:794px;width:112px;text-align:center;font-size:14px;color:#1f58cc;">0</div>
<div class="t" style="left:1560px;top:794px;width:96px;text-align:center;font-size:14px;color:#1f58cc;"><u>0</u></div>
<div class="t" style="left:1656px;top:794px;width:223px;text-align:center;font-size:13px;color:#333;"><span style="color:#2a5fcc">修改</span> | <span style="color:#2a5fcc">简改</span> | <span style="color:#2a5fcc">删除</span></div>
<div class="a" style="left:294px;top:837px;width:12px;height:12px;border:1px solid #ababab;border-radius:2.5px;background:linear-gradient(#ededed,#dcdcdc 40%,#dedede)"></div>
<div class="a" style="left:977px;top:829px;width:50px;height:30px;background:#f1f1f1;border:1px solid #c4c4c4;border-radius:3px"></div>
<div class="t" style="left:977px;top:834px;width:50px;text-align:center;font-size:12px;color:#111">删除</div>
<div class="a" style="left:1031px;top:829px;width:74px;height:30px;background:#f1f1f1;border:1px solid #c4c4c4;border-radius:3px"></div>
<div class="t" style="left:1031px;top:834px;width:74px;text-align:center;font-size:12px;color:#111">取消审核</div>
<div class="a" style="left:1109px;top:829px;width:50px;height:30px;background:#f1f1f1;border:1px solid #c4c4c4;border-radius:3px"></div>
<div class="t" style="left:1109px;top:834px;width:50px;text-align:center;font-size:12px;color:#111">刷新</div>
<div class="a" style="left:1162px;top:829px;width:50px;height:30px;background:#3a82f2;border-radius:3px"></div>
<div class="t" style="left:1162px;top:834px;width:50px;text-align:center;font-size:12px;color:#fff">推送</div>
<div class="a" style="left:1216px;top:830px;width:88px;height:28px;background:#fff;border:1px solid #c6c6c6;border-radius:3px"></div>
<div class="t" style="left:1228px;top:834px;font-size:12px;color:#111;">不推荐</div>
<div class="a" style="left:1292px;top:841px;width:0;height:0;border-left:3.5px solid transparent;border-right:3.5px solid transparent;border-top:6px solid #111"></div>
<div class="a" style="left:1308px;top:829px;width:50px;height:30px;background:#f1f1f1;border:1px solid #c4c4c4;border-radius:3px"></div>
<div class="t" style="left:1308px;top:834px;width:50px;text-align:center;font-size:12px;color:#111">推荐</div>
<div class="a" style="left:1362px;top:830px;width:88px;height:28px;background:#fff;border:1px solid #c6c6c6;border-radius:3px"></div>
<div class="t" style="left:1374px;top:834px;font-size:12px;color:#111;">取消头条</div>
<div class="a" style="left:1438px;top:841px;width:0;height:0;border-left:3.5px solid transparent;border-right:3.5px solid transparent;border-top:6px solid #111"></div>
<div class="a" style="left:1454px;top:829px;width:50px;height:30px;background:#f1f1f1;border:1px solid #c4c4c4;border-radius:3px"></div>
<div class="t" style="left:1454px;top:834px;width:50px;text-align:center;font-size:12px;color:#111">头条</div>
<div class="a" style="left:1508px;top:829px;width:50px;height:30px;background:#f1f1f1;border:1px solid #c4c4c4;border-radius:3px"></div>
<div class="t" style="left:1508px;top:834px;width:50px;text-align:center;font-size:12px;color:#111">归档</div>
<div class="a" style="left:1561px;top:830px;width:88px;height:28px;background:#fff;border:1px solid #c6c6c6;border-radius:3px"></div>
<div class="t" style="left:1573px;top:834px;font-size:12px;color:#111;">不置顶</div>
<div class="a" style="left:1637px;top:841px;width:0;height:0;border-left:3.5px solid transparent;border-right:3.5px solid transparent;border-top:6px solid #111"></div>
<div class="a" style="left:1653px;top:829px;width:50px;height:30px;background:#f1f1f1;border:1px solid #c4c4c4;border-radius:3px"></div>
<div class="t" style="left:1653px;top:834px;width:50px;text-align:center;font-size:12px;color:#111">置顶</div>
<div class="a" style="left:1707px;top:829px;width:74px;height:30px;background:#f1f1f1;border:1px solid #c4c4c4;border-radius:3px"></div>
<div class="t" style="left:1707px;top:834px;width:74px;text-align:center;font-size:12px;color:#111">修改时间</div>
<div class="a" style="left:1785px;top:829px;width:86px;height:30px;background:#3a82f2;border-radius:3px"></div>
<div class="t" style="left:1785px;top:834px;width:86px;text-align:center;font-size:12px;color:#fff">推送至专题</div>
<div class="a" style="left:283px;top:869px;width:33px;height:29px;background:#fff;border:1px solid #dddddd;border-radius:3px"></div>
<div class="t" style="left:283px;top:873px;width:33px;text-align:center;font-size:14px;color:#1f58cc;">9</div>
<div class="a" style="left:1576px;top:870px;width:187px;height:28px;background:#fff;border:1px solid #c6c6c6;border-radius:3px"></div>
<div class="t" style="left:1588px;top:874px;font-size:12px;color:#111;">选择要移动/复制的目标栏目</div>
<div class="a" style="left:1751px;top:881px;width:0;height:0;border-left:3.5px solid transparent;border-right:3.5px solid transparent;border-top:6px solid #111"></div>
<div class="a" style="left:1767px;top:869px;width:50px;height:29px;background:#f1f1f1;border:1px solid #c4c4c4;border-radius:3px"></div>
<div class="t" style="left:1767px;top:873px;width:50px;text-align:center;font-size:12px;color:#111">移动</div>
<div class="a" style="left:1821px;top:869px;width:50px;height:29px;background:#f1f1f1;border:1px solid #c4c4c4;border-radius:3px"></div>
<div class="t" style="left:1821px;top:873px;width:50px;text-align:center;font-size:12px;color:#111">复制</div>
<div class="a" style="left:1915px;top:115px;width:5px;height:736px;background:#bdbdbd;border-radius:3px 0 0 3px;border-left:1px solid #a0a0a0"></div>
<div class="a" style="left:1901px;top:770px;width:46px;height:46px;border-radius:50%;background:#f2f2f2;border:1px solid #c8c8c8;box-shadow:0 1px 4px rgba(0,0,0,.25)"></div>
<div class="a" style="left:1904px;top:773px;width:40px;height:40px;border-radius:50%;background:radial-gradient(circle at 50% 25%,#8be086,#45c04f 55%,#2fa83a)"></div>
<div class="a" style="left:1916px;top:776px;width:4px;height:2px;border-radius:50%;background:rgba(255,255,255,.8)"></div>
<div class="t" style="left:1907px;top:782px;font-size:13px;color:#fff;font-weight:bold;text-shadow:0 0 1px rgba(0,0,0,.4);">57</div>
</body></html>
